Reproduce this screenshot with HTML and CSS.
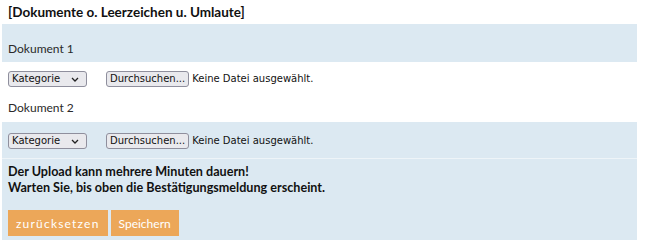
FILE: index.html
```html
<!DOCTYPE html>
<html lang="de">
<head>
<meta charset="utf-8">
<title>Upload</title>
<link rel="stylesheet" href="styles.css">
</head>
<body>
<div class="form">
  <div class="title">[Dokumente o. Leerzeichen u. Umlaute]</div>
  <div class="row blue label-row">Dokument 1</div>
  <div class="row file-row">
    <span class="select-wrap">
      <select class="select"><option>Kategorie</option></select>
      <svg class="chev" width="8" height="5" viewBox="0 0 8 5"><path d="M1 1 L4 4 L7 1" fill="none" stroke="#222" stroke-width="1.3"/></svg>
    </span>
    <span class="file">
      <button class="browse" type="button">Durchsuchen...</button>
      <span class="nofile">Keine Datei ausgewählt.</span>
    </span>
  </div>
  <div class="row label-row2">Dokument 2</div>
  <div class="row blue file-row2">
    <span class="select-wrap">
      <select class="select"><option>Kategorie</option></select>
      <svg class="chev" width="8" height="5" viewBox="0 0 8 5"><path d="M1 1 L4 4 L7 1" fill="none" stroke="#222" stroke-width="1.3"/></svg>
    </span>
    <span class="file">
      <button class="browse" type="button">Durchsuchen...</button>
      <span class="nofile">Keine Datei ausgewählt.</span>
    </span>
  </div>
  <div class="row blue footer">
    <p class="note">Der Upload kann mehrere Minuten dauern!<br>Warten Sie, bis oben die Bestätigungsmeldung erscheint.</p>
    <div class="actions">
      <button class="btn btn-reset" type="button">zurücksetzen</button>
      <button class="btn" type="button">Speichern</button>
    </div>
  </div>
</div>
</body>
</html>
```
FILE: styles.css
```css
html, body {
  margin: 0;
  padding: 0;
  background: #fff;
}
body {
  font-family: "Lato", "Open Sans", sans-serif;
  color: #111;
}
.form {
  width: 635px;
  margin-left: 2px;
}
.title {
  font-weight: 700;
  font-size: 13.5px;
  line-height: 24px;
  height: 24px;
  padding-left: 6px;
}
.row {
  padding-left: 6px;
}
.blue {
  background: #dce9f2;
}
.label-row {
  height: 38px;
  box-sizing: border-box;
  padding-top: 15px;
  font-size: 12px;
  font-weight: 400;
  line-height: 20px;
  color: #2a2a2a;
}
.file-row {
  display: flex;
  align-items: center;
  gap: 19px;
  padding-top: 9px;
  height: 16px;
}
.label-row2 {
  height: 35px;
  box-sizing: border-box;
  padding-top: 11px;
  font-size: 12px;
  font-weight: 400;
  line-height: 20px;
  color: #2a2a2a;
}
.file-row2 {
  display: flex;
  align-items: center;
  gap: 19px;
  height: 37px;
  box-sizing: border-box;
  padding-top: 1px;
  border-bottom: 1px solid #eef4f8;
}
.select-wrap {
  position: relative;
  display: block;
  width: 79px;
  height: 16px;
}
.select {
  display: block;
  appearance: none;
  -webkit-appearance: none;
  width: 79px;
  height: 16px;
  box-sizing: border-box;
  border: 1px solid #8f8f9d;
  border-radius: 3px;
  background: #e9e9ed;
  font-family: "DejaVu Sans", sans-serif;
  font-size: 10px;
  padding: 0 0 0 3px;
  margin: 0;
  color: #111;
  line-height: 14px;
}
.chev {
  position: absolute;
  right: 8px;
  top: 6px;
  pointer-events: none;
}
.file {
  display: flex;
  align-items: center;
  gap: 3px;
}
.browse {
  display: block;
  height: 16px;
  box-sizing: border-box;
  border: 1px solid #8f8f9d;
  border-radius: 3px;
  background: #e9e9ed;
  font-family: "DejaVu Sans", sans-serif;
  font-size: 10px;
  padding: 0 3px;
  margin: 0;
  color: #111;
  line-height: 14px;
}
.nofile {
  font-family: "DejaVu Sans", sans-serif;
  font-size: 10px;
  line-height: 16px;
  color: #111;
}
.footer {
  height: 81px;
  box-sizing: border-box;
  padding-top: 5px;
}
.note {
  margin: 0;
  font-weight: 700;
  font-size: 12.6px;
  line-height: 16px;
  color: #111;
}
.actions {
  display: flex;
  gap: 3px;
  margin-top: 14px;
}
.btn {
  background: #eca759;
  color: #fff;
  border: none;
  margin: 0;
  height: 26px;
  padding: 0 8px;
  font-family: "Lato", sans-serif;
  font-weight: 400;
  font-size: 12px;
}
.btn-reset {
  letter-spacing: 1.2px;
}
```
